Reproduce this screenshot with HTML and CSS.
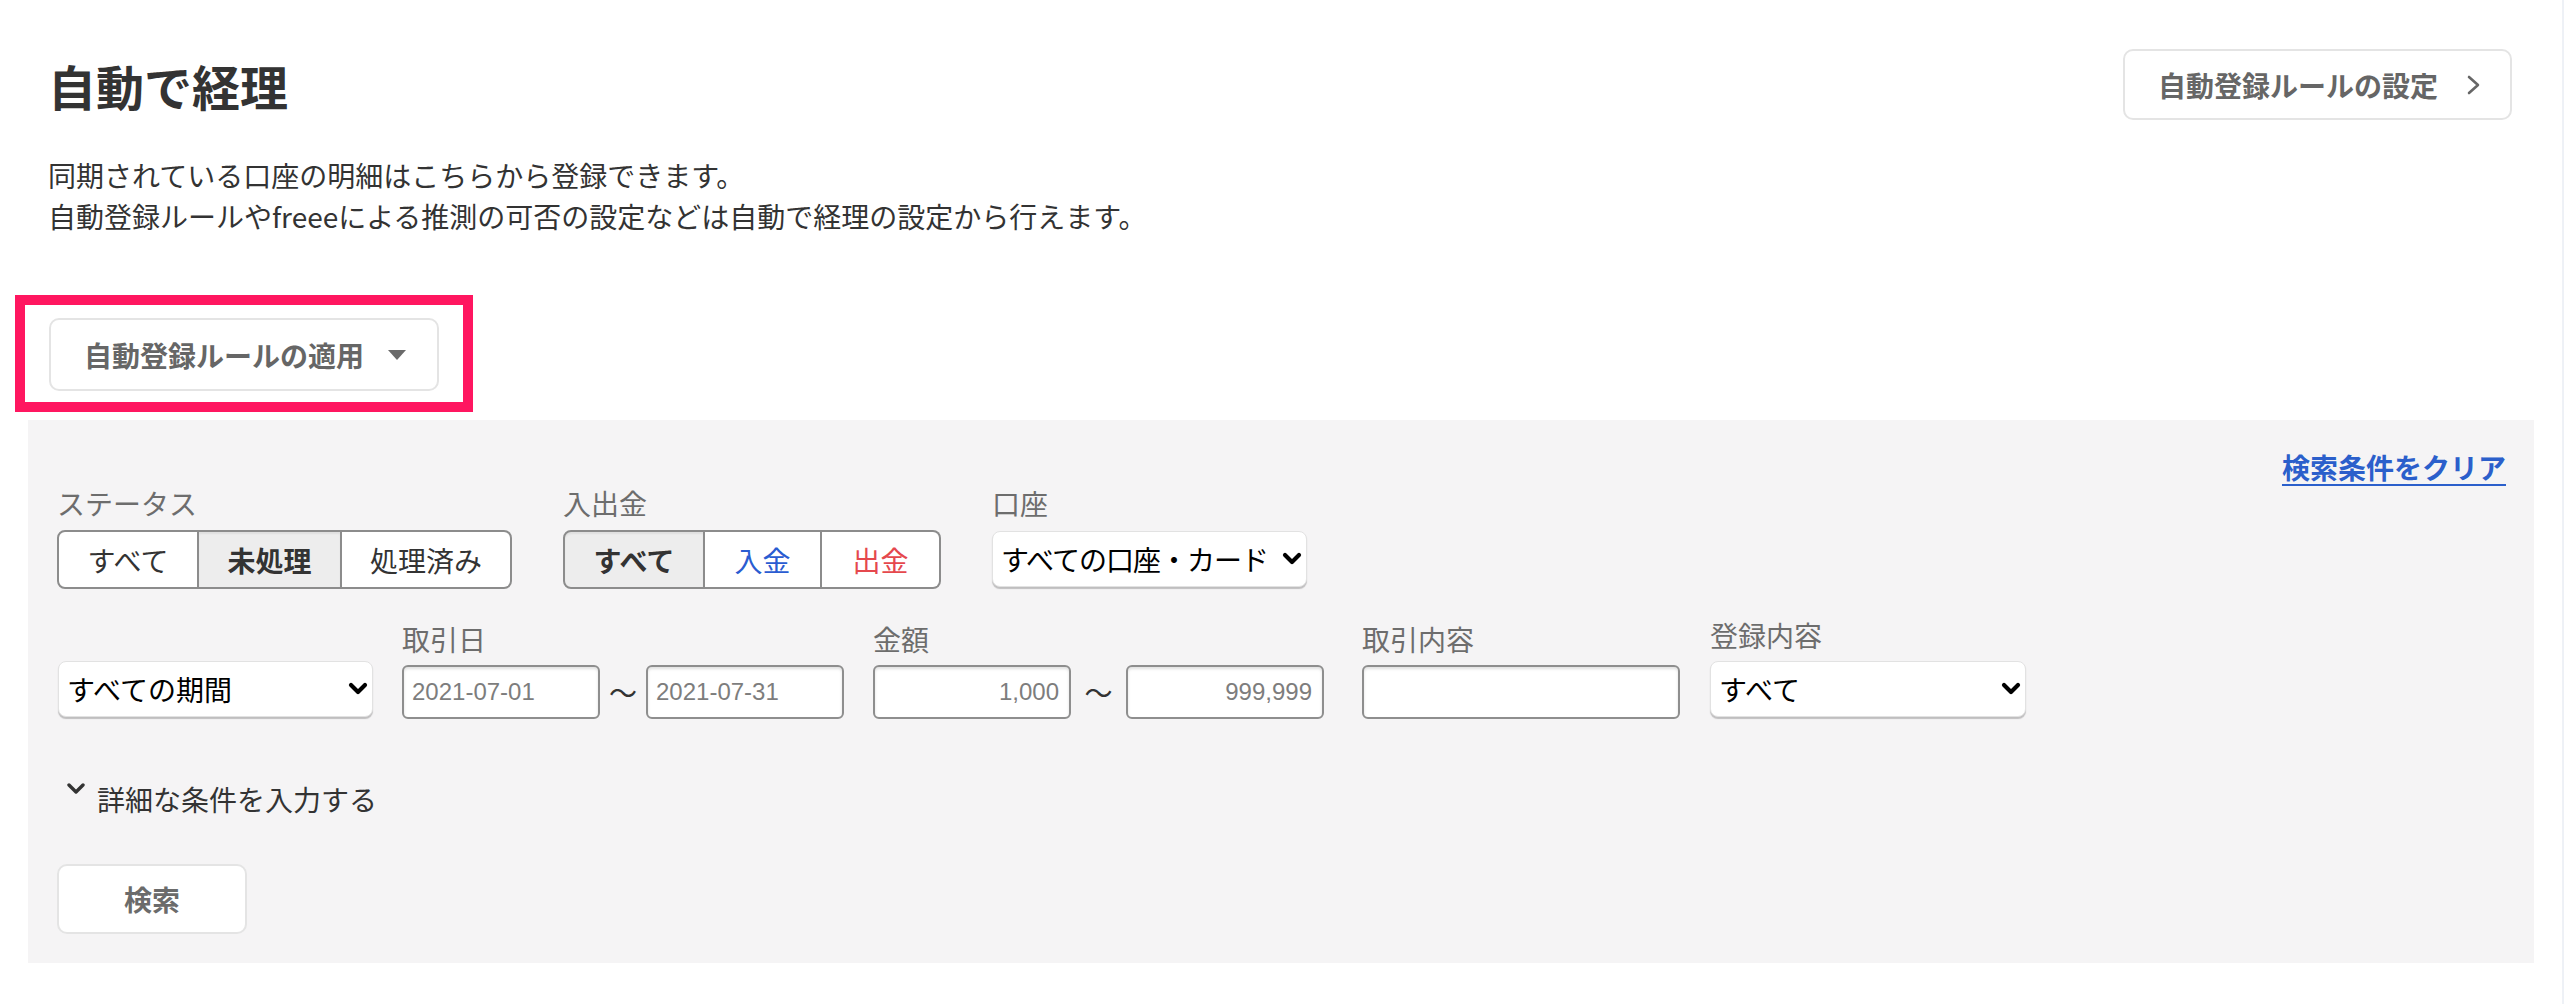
FILE: index.html
```html
<!DOCTYPE html>
<html lang="ja">
<head>
<meta charset="utf-8">
<title>自動で経理</title>
<link rel="stylesheet" href="styles.css">
</head>
<body>
<div class="page">
  <header class="page-header">
    <h1 class="page-title">自動で経理</h1>
    <button class="btn btn-settings" type="button">
      <span>自動登録ルールの設定</span>
      <svg class="icon-chevron-right" width="16" height="20" viewBox="0 0 16 20" aria-hidden="true"><polyline points="3,2 12,10 3,18" fill="none" stroke="#666" stroke-width="2.6" stroke-linecap="round" stroke-linejoin="round"/></svg>
    </button>
  </header>

  <div class="description">
    <p>同期されている口座の明細はこちらから登録できます。</p>
    <p>自動登録ルールやfreeeによる推測の可否の設定などは自動で経理の設定から行えます。</p>
  </div>

  <div class="highlight">
    <button class="btn btn-dropdown" type="button">
      <span>自動登録ルールの適用</span>
      <svg class="icon-caret" width="18" height="10" viewBox="0 0 18 10" aria-hidden="true"><polygon points="0,0 18,0 9,10" fill="#6a6a6a"/></svg>
    </button>
  </div>

  <section class="filter">
    <div class="filter-top">
      <a class="clear-link" href="#">検索条件をクリア</a>
    </div>

    <div class="filter-row row-first">
      <div class="field">
        <div class="field-label">ステータス</div>
        <div class="seg">
          <button class="seg-btn w142" type="button">すべて</button>
          <button class="seg-btn w143 is-active" type="button">未処理</button>
          <button class="seg-btn w170" type="button">処理済み</button>
        </div>
      </div>
      <div class="field">
        <div class="field-label">入出金</div>
        <div class="seg">
          <button class="seg-btn w142 is-active" type="button">すべて</button>
          <button class="seg-btn w117 income" type="button">入金</button>
          <button class="seg-btn w119 outgo" type="button">出金</button>
        </div>
      </div>
      <div class="field">
        <div class="field-label">口座</div>
        <div class="select-wrap select-account">
          <select class="select"><option>すべての口座・カード</option></select>
          <svg class="select-chevron" width="20" height="14" viewBox="0 0 20 14" aria-hidden="true"><polyline points="3,3 10,10 17,3" fill="none" stroke="#000" stroke-width="4.2" stroke-linecap="round" stroke-linejoin="round"/></svg>
        </div>
      </div>
    </div>

    <div class="filter-row row-second">
      <div class="field">
        <div class="select-wrap select-period">
          <select class="select"><option>すべての期間</option></select>
          <svg class="select-chevron" width="20" height="14" viewBox="0 0 20 14" aria-hidden="true"><polyline points="3,3 10,10 17,3" fill="none" stroke="#000" stroke-width="4.2" stroke-linecap="round" stroke-linejoin="round"/></svg>
        </div>
      </div>
      <div class="field field-date">
        <div class="field-label">取引日</div>
        <div class="range">
          <input class="input input-short" type="text" value="2021-07-01">
          <span class="tilde tilde-date">〜</span>
          <input class="input input-short" type="text" value="2021-07-31">
        </div>
      </div>
      <div class="field field-amount">
        <div class="field-label">金額</div>
        <div class="range">
          <input class="input input-short num" type="text" value="1,000">
          <span class="tilde tilde-amount">〜</span>
          <input class="input input-short num" type="text" value="999,999">
        </div>
      </div>
      <div class="field field-content">
        <div class="field-label">取引内容</div>
        <input class="input input-long" type="text" value="">
      </div>
      <div class="field field-registered">
        <div class="field-label">登録内容</div>
        <div class="select-wrap select-registered">
          <select class="select"><option>すべて</option></select>
          <svg class="select-chevron" width="20" height="14" viewBox="0 0 20 14" aria-hidden="true"><polyline points="3,3 10,10 17,3" fill="none" stroke="#000" stroke-width="4.2" stroke-linecap="round" stroke-linejoin="round"/></svg>
        </div>
      </div>
    </div>

    <div class="more">
      <svg class="icon-more" width="18" height="11" viewBox="0 0 18 11" aria-hidden="true"><polyline points="2,2 9,9 16,2" fill="none" stroke="#333" stroke-width="3.4" stroke-linecap="round" stroke-linejoin="round"/></svg>
      <span>詳細な条件を入力する</span>
    </div>

    <button class="btn btn-search" type="button">検索</button>
  </section>
</div>
</body>
</html>
```

FILE: styles.css
```css
html, body {
  margin: 0;
  padding: 0;
  background: #ffffff;
}

body {
  font-family: "Noto Sans CJK JP", "Noto Sans", sans-serif;
  color: #333333;
}

.page {
  box-sizing: border-box;
  min-height: 100vh;
  padding: 49px 28px 0 28px;
  border-right: 2px solid #eef1f6;
}

/* header */
.page-header {
  display: flex;
  align-items: center;
  justify-content: space-between;
  height: 71px;
  padding: 0 22px 0 20px;
}

.page-title {
  margin: 0;
  font-size: 48px;
  line-height: 1;
  font-weight: 700;
  color: #333333;
}

.btn {
  font-family: "Noto Sans CJK JP", "Noto Sans", sans-serif;
  background: #ffffff;
  box-sizing: border-box;
  cursor: pointer;
}

.btn-settings {
  display: flex;
  align-items: center;
  justify-content: space-between;
  width: 389px;
  height: 71px;
  padding: 0 28px 0 33px;
  border: 2px solid #e4e4e4;
  border-radius: 10px;
  font-size: 28px;
  font-weight: 700;
  color: #666666;
}

/* description */
.description {
  margin-top: 35px;
  padding-left: 20px;
  font-size: 28px;
  line-height: 41px;
  color: #333333;
}

.description p {
  margin: 0;
}

/* highlighted dropdown */
.highlight {
  width: fit-content;
  margin: 58px 0 0 -13px;
  padding: 13px 24px 11px 24px;
  border: 10px solid #ff1660;
}

.btn-dropdown {
  display: flex;
  align-items: center;
  justify-content: space-between;
  width: 390px;
  height: 73px;
  padding: 0 31px 0 33px;
  border: 2px solid #e4e4e4;
  border-radius: 10px;
  font-size: 28px;
  font-weight: 700;
  color: #666666;
}

/* filter panel */
.filter {
  margin-top: 8px;
  padding: 29px 28px 29px 29px;
  background: #f5f4f5;
}

.filter-top {
  display: flex;
  justify-content: flex-end;
  line-height: 36px;
}

.clear-link {
  font-size: 28px;
  font-weight: 700;
  color: #2b5fcb;
  text-decoration: underline;
  text-underline-offset: 5px;
  text-decoration-thickness: 2px;
}

.filter-row {
  display: flex;
}

.row-first {
  gap: 51px;
  align-items: flex-start;
}

.row-second {
  margin-top: 28px;
  align-items: flex-end;
}

.field {
  display: flex;
  flex-direction: column;
}

.field-label {
  font-size: 28px;
  line-height: 36px;
  color: #6d6d6d;
  margin-bottom: 9px;
}

.row-second .field-label {
  margin-bottom: 8px;
}

/* segmented control */
.seg {
  display: flex;
}

.seg-btn {
  box-sizing: border-box;
  height: 59px;
  padding: 0;
  border: 2px solid #8c8c8c;
  border-left: none;
  background: #ffffff;
  font-family: "Noto Sans CJK JP", "Noto Sans", sans-serif;
  font-size: 28px;
  color: #333333;
  cursor: pointer;
}

.seg-btn:first-child {
  border-left: 2px solid #8c8c8c;
  border-radius: 8px 0 0 8px;
}

.seg-btn:last-child {
  border-radius: 0 8px 8px 0;
}

.seg-btn.is-active {
  background: #ededed;
  font-weight: 700;
  box-shadow: inset 0 2px 2px rgba(0, 0, 0, 0.06);
}

.seg-btn.income { color: #2a5cd1; }
.seg-btn.outgo { color: #e5484d; }

.w142 { width: 142px; }
.w143 { width: 143px; }
.w170 { width: 170px; }
.w117 { width: 117px; }
.w119 { width: 119px; }

/* selects */
.select-wrap {
  position: relative;
  height: 56px;
}

.select-account {
  width: 315px;
  margin-top: 1px;
}

.select-period {
  width: 315px;
  margin-left: 1px;
  margin-bottom: 2px;
}

.select-registered {
  width: 316px;
  margin-bottom: 2px;
}

.select {
  -webkit-appearance: none;
  appearance: none;
  box-sizing: border-box;
  width: 100%;
  height: 56px;
  padding: 0 12px 0 8px;
  border: 1px solid #e2e2e2;
  border-radius: 8px;
  background: #ffffff;
  box-shadow: 0 2px 1px rgba(0, 0, 0, 0.22);
  font-family: "Noto Sans CJK JP", "Noto Sans", sans-serif;
  font-size: 28px;
  color: #000000;
}

.select-account .select {
  letter-spacing: -1px;
}

.select-chevron {
  position: absolute;
  right: 5px;
  top: 21px;
  pointer-events: none;
}

/* inputs */
.range {
  display: flex;
  align-items: center;
}

.input {
  box-sizing: border-box;
  height: 54px;
  padding: 0 8px;
  border: 2px solid #8e8e8e;
  border-radius: 6px;
  background: #ffffff;
  box-shadow: inset 0 2px 3px rgba(0, 0, 0, 0.12);
  font-family: "Liberation Sans", Arial, sans-serif;
  font-size: 24px;
  color: #7d7d7d;
}

.input.num {
  text-align: right;
  padding-right: 10px;
}

.input-short { width: 198px; }
.input-long { width: 318px; }

.tilde {
  text-align: center;
  font-size: 28px;
  color: #333333;
}

.tilde-date { width: 46px; }
.tilde-amount { width: 55px; }

.field-date { margin-left: 29px; }
.field-amount { margin-left: 29px; }
.field-content { margin-left: 38px; }
.field-registered { margin-left: 30px; }

/* more conditions */
.more {
  display: flex;
  align-items: flex-start;
  margin-top: 62px;
  padding-left: 10px;
  font-size: 28px;
  line-height: 36px;
  color: #333333;
}

.icon-more {
  margin-top: 2px;
  margin-right: 12px;
}

/* search */
.btn-search {
  display: block;
  margin-top: 47px;
  width: 190px;
  height: 70px;
  border: 2px solid #e4e4e4;
  border-radius: 10px;
  font-size: 28px;
  font-weight: 700;
  color: #6b6b6b;
}
```
